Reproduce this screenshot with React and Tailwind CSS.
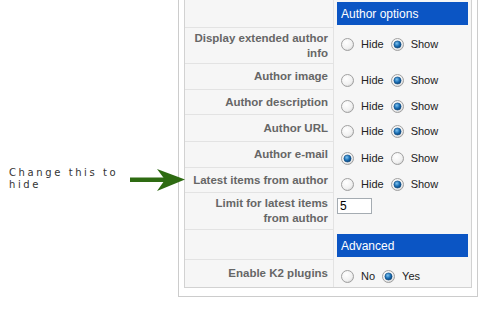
import React from "react";

function Radio({ checked }) {
  return (
    <svg width="13" height="13" viewBox="0 0 13 13" className="shrink-0">
      <defs>
        <radialGradient id="rg" cx="40%" cy="35%" r="70%">
          <stop offset="0%" stopColor="#ffffff" />
          <stop offset="70%" stopColor="#f0f0f0" />
          <stop offset="100%" stopColor="#cfcfcf" />
        </radialGradient>
        <radialGradient id="dot" cx="40%" cy="35%" r="70%">
          <stop offset="0%" stopColor="#7fc3ef" />
          <stop offset="55%" stopColor="#1a6fb5" />
          <stop offset="100%" stopColor="#0b3e6e" />
        </radialGradient>
      </defs>
      <circle cx="6.5" cy="6.5" r="6" fill="url(#rg)" stroke="#a0a0a0" strokeWidth="1" />
      {checked && <circle cx="6.5" cy="6.5" r="3.6" fill="url(#dot)" stroke="#0f4a80" strokeWidth="0.6" />}
    </svg>
  );
}

function RadioPair({ a = "Hide", b = "Show", sel }) {
  return (
    <div className="flex items-center text-[11px] leading-[13px] text-[#222] mt-[9px]">
      <span className="ml-[4px] flex"><Radio checked={sel === 0} /></span>
      <span className="ml-[7px] pt-[1px]">{a}</span>
      <span className="ml-[7px] flex"><Radio checked={sel === 1} /></span>
      <span className="ml-[7px] pt-[1px]">{b}</span>
    </div>
  );
}

function Row({ h, label, children, last }) {
  return (
    <div className={`flex ${h}`}>
      <div
        className={`w-[149px] shrink-0 border-r border-[#e3e3e3] ${last ? "" : "border-b"} flex items-center justify-end text-right pr-[5px] pl-[4px] text-[11.5px] font-bold leading-[15px] text-[#666666]`}
      >
        {label}
      </div>
      <div className="flex-1 pl-[3px] pr-[3px] flex items-start">{children}</div>
    </div>
  );
}

function Header({ children }) {
  return (
    <div className="w-full h-[23px] bg-[#0b55c4] text-white text-[12px] flex items-center pl-[4px]">
      {children}
    </div>
  );
}

export default function App() {
  return (
    <div className="relative w-[487px] h-[312px] bg-white overflow-hidden font-['Liberation_Sans',Arial,sans-serif]">
      <div className="ml-[178px] w-[300px] border-x border-b border-[#cccccc] px-[5px] pb-[8px]">
        <div className="border-x border-b border-[#d2d2d2] bg-[#f6f6f6]">
          <Row h="h-[28px]" label="">
            <div className="w-full mt-[2px]">
              <Header>Author options</Header>
            </div>
          </Row>
          <Row h="h-[36px]" label={<span>Display extended author<br />info</span>}>
            <RadioPair sel={1} />
          </Row>
          <Row h="h-[26px]" label="Author image">
            <RadioPair sel={1} />
          </Row>
          <Row h="h-[25px]" label="Author description">
            <RadioPair sel={1} />
          </Row>
          <Row h="h-[27px]" label="Author URL">
            <RadioPair sel={1} />
          </Row>
          <Row h="h-[26px]" label="Author e-mail">
            <RadioPair sel={0} />
          </Row>
          <Row h="h-[25px]" label="Latest items from author">
            <RadioPair sel={1} />
          </Row>
          <Row h="h-[37px]" label={<span>Limit for latest items<br />from author</span>}>
            <div className="mt-[5px] w-[35px] h-[16px] border border-[#a5acb2] bg-white text-[12px] leading-[14px] pl-[2px] text-black">
              5
            </div>
          </Row>
          <Row h="h-[30px]" label="">
            <div className="w-full mt-[4px]">
              <Header>Advanced</Header>
            </div>
          </Row>
          <Row h="h-[27px]" label="Enable K2 plugins" last>
            <RadioPair a="No" b="Yes" sel={1} />
          </Row>
        </div>
      </div>

      <div className="absolute left-[9px] top-[167px] text-[10px] leading-[12px] tracking-[2.6px] text-[#333] font-['DejaVu_Sans',Verdana,sans-serif]">
        Change this to
        <br />
        hide
      </div>
      <svg className="absolute left-[128px] top-[166px]" width="60" height="28" viewBox="0 0 60 28">
        <rect x="2" y="11.5" width="36" height="4.5" fill="#2e6b12" />
        <polygon points="29,3 57,13.5 29,25 37,13.8" fill="#2e6b12" />
      </svg>
    </div>
  );
}
